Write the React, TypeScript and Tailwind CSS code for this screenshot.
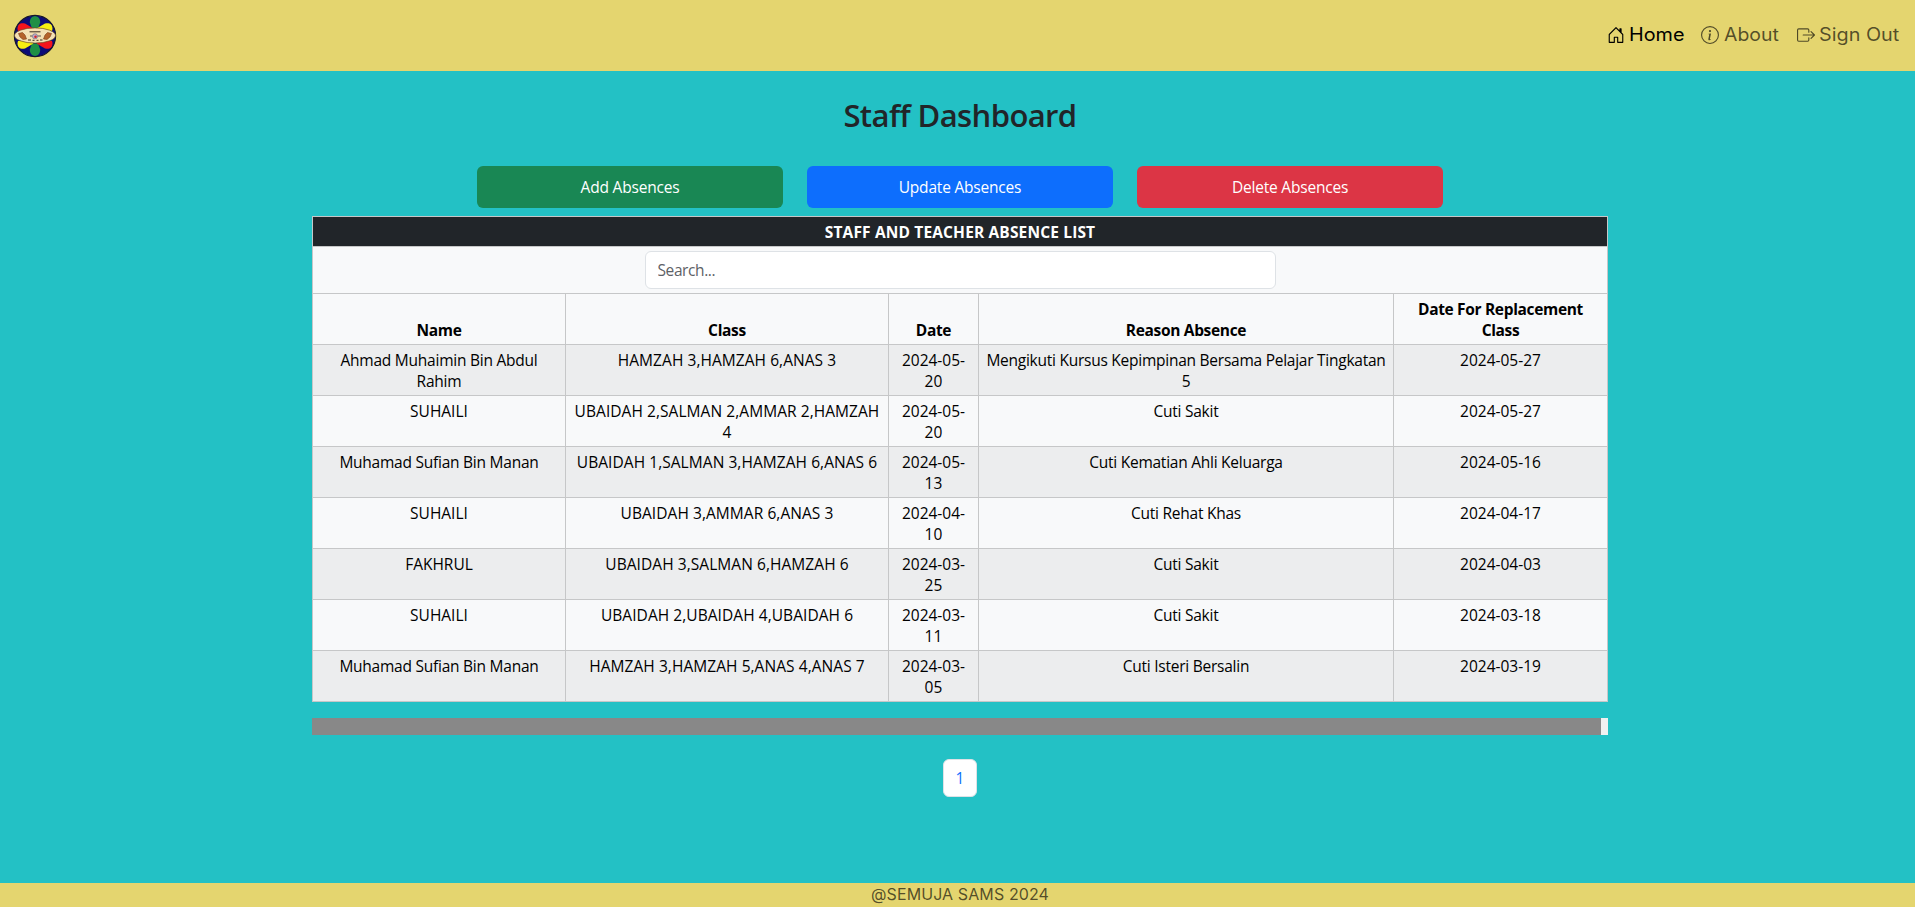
import { BsBoxArrowRight, BsHouseDoor, BsInfoCircle } from "react-icons/bs";

type Absence = {
  name: string;
  classes: string;
  date: [string, string];
  reason: string;
  replacement: string;
};

const absences: Absence[] = [
  { name: "Ahmad Muhaimin Bin Abdul Rahim", classes: "HAMZAH 3,HAMZAH 6,ANAS 3", date: ["2024-05-", "20"], reason: "Mengikuti Kursus Kepimpinan Bersama Pelajar Tingkatan 5", replacement: "2024-05-27" },
  { name: "SUHAILI", classes: "UBAIDAH 2,SALMAN 2,AMMAR 2,HAMZAH 4", date: ["2024-05-", "20"], reason: "Cuti Sakit", replacement: "2024-05-27" },
  { name: "Muhamad Sufian Bin Manan", classes: "UBAIDAH 1,SALMAN 3,HAMZAH 6,ANAS 6", date: ["2024-05-", "13"], reason: "Cuti Kematian Ahli Keluarga", replacement: "2024-05-16" },
  { name: "SUHAILI", classes: "UBAIDAH 3,AMMAR 6,ANAS 3", date: ["2024-04-", "10"], reason: "Cuti Rehat Khas", replacement: "2024-04-17" },
  { name: "FAKHRUL", classes: "UBAIDAH 3,SALMAN 6,HAMZAH 6", date: ["2024-03-", "25"], reason: "Cuti Sakit", replacement: "2024-04-03" },
  { name: "SUHAILI", classes: "UBAIDAH 2,UBAIDAH 4,UBAIDAH 6", date: ["2024-03-", "11"], reason: "Cuti Sakit", replacement: "2024-03-18" },
  { name: "Muhamad Sufian Bin Manan", classes: "HAMZAH 3,HAMZAH 5,ANAS 4,ANAS 7", date: ["2024-03-", "05"], reason: "Cuti Isteri Bersalin", replacement: "2024-03-19" },
];

function Logo() {
  return (
    <svg viewBox="0 0 44 44" className="size-11" aria-hidden="true">
      <defs>
        <clipPath id="disc">
          <circle cx="22" cy="22" r="20" />
        </clipPath>
      </defs>
      <circle cx="22" cy="22" r="20.6" fill="#0c0c78" stroke="#15152a" strokeWidth="1.2" />
      <g clipPath="url(#disc)">
        <path d="M22 2c3.500 0 5.200 3 5.200 6.500L25 14.500h-6L16.800 8.500C16.800 5 18.500 2 22 2Z" fill="#1f8f45" />
        <path d="M22 42c3.500 0 5.200-3 5.200-6.500L25 29.500h-6l-2.200 6C16.800 39 18.500 42 22 42Z" fill="#1f8f45" />
        <path d="M4.500 15C4.500 9.500 8 8.500 12 9.500l8.500 5L17 17H5Z" fill="#f4141c" />
        <path d="M39.500 15C39.500 9.500 36 8.500 32 9.500l-8.500 5L27 17h12Z" fill="#f6ee12" />
        <path d="M4.500 29c0 5.500 3.500 6.500 7.500 5.500l8.500-5L17 27H5Z" fill="#f6ee12" />
        <path d="M39.500 29c0 5.500-3.500 6.500-7.500 5.500l-8.500-5L27 27h12Z" fill="#f4141c" />
      </g>
      <ellipse cx="22" cy="21.500" rx="20.500" ry="7.600" fill="#f3e0b4" stroke="#6d4a22" strokeWidth=".7" />
      <path d="M5.500 19.500l4-1 2.500 2.500 1.500 4-3.500.5-3-2.500ZM38.500 19.500l-4-1-2.500 2.500-1.500 4 3.500.5 3-2.500Z" fill="#b4622b" stroke="#7d3d18" strokeWidth=".6" />
      <path d="M16.500 17.800h11M15 26h3m1.500.3h2m2 0h2M27 26h2.500" stroke="#3a2a1c" strokeWidth="1" />
      <path d="M17 22h2.500m5 0h3.500" stroke="#8c8478" strokeWidth="1.600" />
      <circle cx="22" cy="22.300" r="2.600" fill="#b9b2cc" stroke="#5d5570" strokeWidth=".5" />
      <circle cx="22.500" cy="22.800" r="1.300" fill="#d8232b" />
    </svg>
  );
}

function Navbar() {
  return (
    <header className="flex h-[71px] shrink-0 items-center justify-between bg-[#e4d56f] pl-[13px] pr-[14px]">
      <Logo />
      <nav className="mb-[2px] flex h-[18px] items-center font-['Inter',sans-serif] text-[18px] leading-[18px] text-black/65">
        <a className="flex w-[94px] items-center gap-[4px] text-black">
          <BsHouseDoor className="size-[18px] shrink-0" />
          <span className="origin-left scale-x-[1.1]">Home</span>
        </a>
        <a className="flex w-[96px] items-center gap-[5px]">
          <BsInfoCircle className="size-[18px] shrink-0" />
          <span className="origin-left scale-x-[1.08]">About</span>
        </a>
        <a className="flex w-[104px] items-center gap-[4px] whitespace-nowrap">
          <BsBoxArrowRight className="size-[18px] shrink-0" />
          <span className="origin-left scale-x-[1.1]">Sign Out</span>
        </a>
      </nav>
    </header>
  );
}

const cell = "border border-[#c6c7c8] pt-[5px] pb-[3px]";

function AbsenceTable() {
  return (
    <table className="w-[1296px] table-fixed border-collapse text-center text-[15.500px] leading-[21px] text-black">
      <colgroup>
        <col className="w-[253px]" />
        <col className="w-[323px]" />
        <col className="w-[90px]" />
        <col className="w-[415px]" />
        <col className="w-[214px]" />
      </colgroup>
      <thead>
        <tr className="h-[30px] bg-[#212529] text-white">
          <th colSpan={5} className={`${cell} px-1 font-bold tracking-[0.150px]`}>
            STAFF AND TEACHER ABSENCE LIST
          </th>
        </tr>
        <tr className="h-[47px] bg-[#f8f9fa]">
          <th colSpan={5} className="border border-[#c6c7c8] p-1">
            <input
              type="text"
              placeholder="Search..."
              className="mx-auto block h-[38px] w-[631px] rounded-md border border-[#dee2e6] bg-white px-3 font-normal tracking-[-0.400px] placeholder:text-[#5d6166]"
            />
          </th>
        </tr>
        <tr className="h-[51px] bg-[#f8f9fa] align-bottom font-bold tracking-[-0.330px]">
          <th className={`${cell} px-1`}>Name</th>
          <th className={`${cell} px-1`}>Class</th>
          <th className={`${cell} px-1`}>Date</th>
          <th className={`${cell} px-1`}>Reason Absence</th>
          <th className={`${cell} px-1`}>
            Date For Replacement
            <br />
            Class
          </th>
        </tr>
      </thead>
      <tbody>
        {absences.map((row, i) => (
          <tr key={i} className="h-[51px] bg-[#f8f9fa] align-top odd:bg-[#ecedee]">
            <td className={`${cell} px-5 ${row.name === row.name.toUpperCase() ? "" : "tracking-[-0.240px]"}`}>{row.name}</td>
            <td className={`${cell} px-1 tracking-[0.060px]`}>{row.classes}</td>
            <td className={`${cell} px-1`}>
              {row.date[0]}
              <br />
              {row.date[1]}
            </td>
            <td className={`${cell} px-1 tracking-[-0.250px]`}>{row.reason}</td>
            <td className={`${cell} px-1`}>{row.replacement}</td>
          </tr>
        ))}
      </tbody>
    </table>
  );
}

export default function App() {
  return (
    <div className="flex h-[907px] w-full flex-col bg-[#23c1c5] font-['Open_Sans',sans-serif]">
      <Navbar />
      <main className="flex grow flex-col items-center pl-[5px]">
        <h1 className="mt-[25px] text-[31px] font-semibold leading-[38px] tracking-[-0.600px] text-[#212529]">Staff Dashboard</h1>
        <div className="mt-8 flex gap-6 text-[15.500px] tracking-[-0.200px] text-white">
          <button className="h-[42px] w-[306px] rounded-md bg-[#198754] pt-[2px]">Add Absences</button>
          <button className="h-[42px] w-[306px] rounded-md bg-[#0d6efd] pt-[2px]">Update Absences</button>
          <button className="h-[42px] w-[306px] rounded-md bg-[#dc3545] pt-[2px]">Delete Absences</button>
        </div>
        <div className="mt-2">
          <AbsenceTable />
        </div>
        <div className="mt-4 h-[17px] w-[1296px] bg-[#f1f1f1]">
          <div className="h-full w-[1289px] bg-[#888888]" />
        </div>
        <button className="mt-6 h-[38px] w-[34px] rounded-md border border-[#dee2e6] bg-white pt-[2px] text-[15.500px] text-[#0d6efd]">1</button>
      </main>
      <footer className="h-6 shrink-0 bg-[#e4d56f] pb-px pl-[5px] text-center font-['Inter',sans-serif] text-base leading-[23px] tracking-[0.100px] text-black/65">
        @SEMUJA SAMS 2024
      </footer>
    </div>
  );
}
